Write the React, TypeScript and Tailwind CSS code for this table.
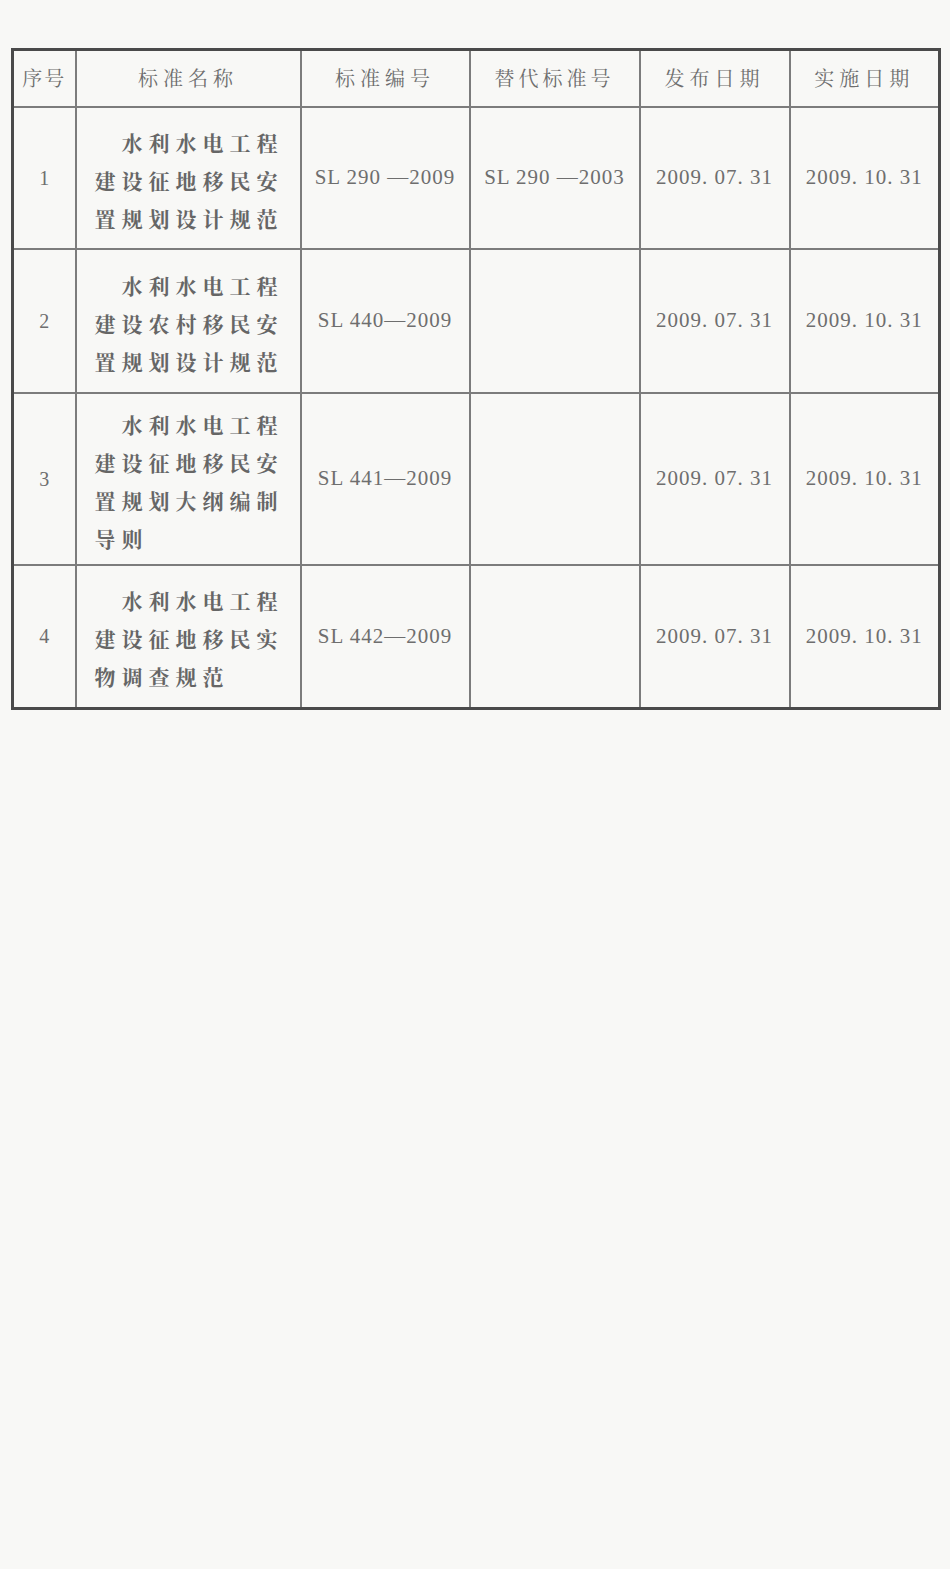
import React from "react";

const cjk = { fontFamily: '"Noto Serif CJK SC","Noto Sans CJK SC","Noto Sans CJK JP",serif' };
const serif = { fontFamily: '"Liberation Serif","Times New Roman",serif' };

type Row = { no: string; name: string[]; code: string; rep: string; pub: string; impl: string; h: string };

const rows: Row[] = [
  { no: "1", name: ["水利水电工程", "建设征地移民安", "置规划设计规范"], code: "SL 290 —2009", rep: "SL 290 —2003", pub: "2009. 07. 31", impl: "2009. 10. 31", h: "h-[142px]" },
  { no: "2", name: ["水利水电工程", "建设农村移民安", "置规划设计规范"], code: "SL 440—2009", rep: "", pub: "2009. 07. 31", impl: "2009. 10. 31", h: "h-[144px]" },
  { no: "3", name: ["水利水电工程", "建设征地移民安", "置规划大纲编制", "导则"], code: "SL 441—2009", rep: "", pub: "2009. 07. 31", impl: "2009. 10. 31", h: "h-[172px]" },
  { no: "4", name: ["水利水电工程", "建设征地移民实", "物调查规范"], code: "SL 442—2009", rep: "", pub: "2009. 07. 31", impl: "2009. 10. 31", h: "h-[144px]" },
];

const cell = "border-2 border-[#7c7c7c] p-0 align-middle text-center";

export default function App() {
  return (
    <div className="w-[950px] h-[1569px] bg-[#f8f8f6] pt-[48px] pl-[11px]">
      <table className="table-fixed border-collapse w-[927px] border-[3px] border-[#4a4a4a] text-[#6e6e6e]">
        <colgroup>
          <col className="w-[63px]" />
          <col className="w-[225px]" />
          <col className="w-[169px]" />
          <col className="w-[170px]" />
          <col className="w-[150px]" />
          <col className="w-[150px]" />
        </colgroup>
        <thead>
          <tr className="h-[57px]">
            <th className={cell + " font-normal text-[20px] tracking-[2px]"} style={cjk}>序号</th>
            <th className={cell + " font-normal text-[20px] tracking-[5px]"} style={cjk}>标准名称</th>
            <th className={cell + " font-normal text-[20px] tracking-[5px]"} style={cjk}>标准编号</th>
            <th className={cell + " font-normal text-[20px] tracking-[4px]"} style={cjk}>替代标准号</th>
            <th className={cell + " font-normal text-[20px] tracking-[5px]"} style={cjk}>发布日期</th>
            <th className={cell + " font-normal text-[20px] tracking-[5px]"} style={cjk}>实施日期</th>
          </tr>
        </thead>
        <tbody>
          {rows.map((r) => (
            <tr key={r.no} className={r.h}>
              <td className={cell + " text-[20px]"} style={serif}>{r.no}</td>
              <td className={cell + " text-left pl-[18px] pt-[4px]"}>
                <div className="flex flex-col text-[21px] leading-[38px] tracking-[6px] font-bold text-[#666666]" style={cjk}>
                  {r.name.map((l, i) => (
                    <div key={i} className={i === 0 ? "pl-[27px] whitespace-nowrap" : "whitespace-nowrap"}>{l}</div>
                  ))}
                </div>
              </td>
              <td className={cell + " text-[21px] tracking-[1px]"} style={serif}>{r.code}</td>
              <td className={cell + " text-[21px] tracking-[1px]"} style={serif}>{r.rep}</td>
              <td className={cell + " text-[21px] tracking-[1px]"} style={serif}>{r.pub}</td>
              <td className={cell + " text-[21px] tracking-[1px]"} style={serif}>{r.impl}</td>
            </tr>
          ))}
        </tbody>
      </table>
    </div>
  );
}
